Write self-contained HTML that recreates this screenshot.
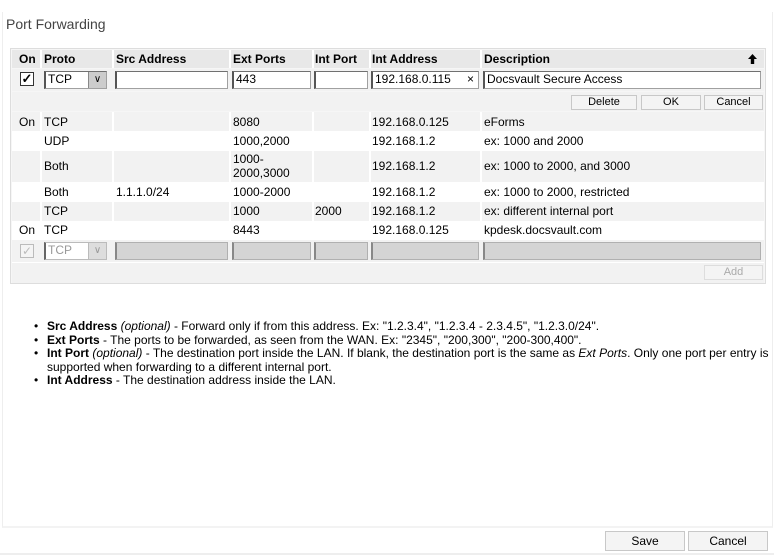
<!DOCTYPE html>
<html><head><meta charset="utf-8"><style>
*{box-sizing:border-box;margin:0;padding:0}
body{width:774px;height:555px;background:#fff;font-family:"Liberation Sans",Arial,sans-serif;font-size:12px;color:#000;position:relative;overflow:hidden}
.a{position:absolute}
.row{position:absolute;left:12px;width:752px}
.g{background:#f2f2f2}
.w{background:#fff}
.t{position:absolute;white-space:nowrap;line-height:14px}
.inp{position:absolute;height:18px;background:#fff;border:1px solid #a0a0a0;border-top-color:#707070;border-left:2px solid #555;font-size:12px;line-height:15px;padding-left:2px}
.dis{background:#d4d4d4;border-color:#b0b0b0;border-left-color:#888}
.btn{position:absolute;height:15px;background:#f4f4f4;border:1px solid #c8c8c8;text-align:center;font-size:11px;line-height:13px}
.vl{position:absolute;top:0;bottom:0;width:2px;background:#fff}
.n{position:relative;padding-left:13px;white-space:nowrap}
.n:before{content:"•";position:absolute;left:0}
</style></head><body>
<div class="a" style="left:2px;top:12px;width:771px;height:516px;border-left:1px solid #eee;border-right:1px solid #eee;border-bottom:2px solid #f3f3f3"></div>
<div class="a" style="left:6px;top:16px;font-size:14px;color:#444">Port Forwarding</div>
<div class="a" style="left:10px;top:48px;width:756px;height:236px;border:1px solid #ddd;background:#f6f6f6"></div>
<div class="row" style="top:50px;height:18px;background:#e8e8e8;font-weight:bold">
<div class="vl" style="left:28px"></div><div class="vl" style="left:100px"></div><div class="vl" style="left:217px"></div><div class="vl" style="left:300px"></div><div class="vl" style="left:357px"></div><div class="vl" style="left:468px"></div>
<span class="t" style="left:7px;top:2px">On</span><span class="t" style="left:32px;top:2px">Proto</span><span class="t" style="left:104px;top:2px">Src Address</span><span class="t" style="left:221px;top:2px">Ext Ports</span><span class="t" style="left:303px;top:2px">Int Port</span><span class="t" style="left:360px;top:2px">Int Address</span><span class="t" style="left:472px;top:2px">Description</span>
<svg class="a" style="left:736px;top:4px" width="9" height="10" viewBox="0 0 9 10"><path d="M4.5 0L9 5H6.2V10H2.8V5H0Z" fill="#000"/></svg>
</div>
<div class="row g" style="top:69px;height:22px"></div>
<div class="a" style="left:20px;top:72px;width:14px;height:14px;border:1px solid #333;background:#fff;font-size:13px;line-height:12px;text-align:center;font-weight:bold">✓</div>
<div class="inp" style="left:44px;top:71px;width:63px;border-left:2px solid #555">TCP</div>
<div class="a" style="left:88px;top:72px;width:18px;height:16px;background:#ccc;border-left:1px solid #888;text-align:center;font-size:10px;line-height:15px">&#x2228;</div>
<div class="inp" style="left:115px;top:71px;width:113px"></div>
<div class="inp" style="left:232px;top:71px;width:79px">443</div>
<div class="inp" style="left:314px;top:71px;width:54px"></div>
<div class="inp" style="left:371px;top:71px;width:108px">192.168.0.115<span style="position:absolute;right:4px;top:0">×</span></div>
<div class="inp" style="left:483px;top:71px;width:278px">Docsvault Secure Access</div>
<div class="row g" style="top:92px;height:19px"></div>
<div class="btn" style="left:571px;top:95px;width:66px">Delete</div>
<div class="btn" style="left:641px;top:95px;width:60px">OK</div>
<div class="btn" style="left:704px;top:95px;width:59px">Cancel</div>
<div class="row g" style="top:112px;height:19px"><div class="vl" style="left:28px"></div><div class="vl" style="left:100px"></div><div class="vl" style="left:217px"></div><div class="vl" style="left:300px"></div><div class="vl" style="left:357px"></div><div class="vl" style="left:468px"></div></div>
<div class="row w" style="top:131px;height:20px"></div>
<div class="row g" style="top:151px;height:31px"><div class="vl" style="left:28px"></div><div class="vl" style="left:100px"></div><div class="vl" style="left:217px"></div><div class="vl" style="left:300px"></div><div class="vl" style="left:357px"></div><div class="vl" style="left:468px"></div></div>
<div class="row w" style="top:182px;height:20px"></div>
<div class="row g" style="top:202px;height:19px"><div class="vl" style="left:28px"></div><div class="vl" style="left:100px"></div><div class="vl" style="left:217px"></div><div class="vl" style="left:300px"></div><div class="vl" style="left:357px"></div><div class="vl" style="left:468px"></div></div>
<div class="row w" style="top:221px;height:19px"></div>
<span class="t a" style="left:19px;top:115px">On</span><span class="t" style="left:44px;top:115px">TCP</span><span class="t" style="left:233px;top:115px">8080</span><span class="t" style="left:372px;top:115px">192.168.0.125</span><span class="t" style="left:484px;top:115px">eForms</span>
<span class="t" style="left:44px;top:134px">UDP</span><span class="t" style="left:233px;top:134px">1000,2000</span><span class="t" style="left:372px;top:134px">192.168.1.2</span><span class="t" style="left:484px;top:134px">ex: 1000 and 2000</span>
<span class="t" style="left:44px;top:159px">Both</span><span class="t" style="left:233px;top:152px">1000-<br>2000,3000</span><span class="t" style="left:372px;top:159px">192.168.1.2</span><span class="t" style="left:484px;top:159px">ex: 1000 to 2000, and 3000</span>
<span class="t" style="left:44px;top:185px">Both</span><span class="t" style="left:116px;top:185px">1.1.1.0/24</span><span class="t" style="left:233px;top:185px">1000-2000</span><span class="t" style="left:372px;top:185px">192.168.1.2</span><span class="t" style="left:484px;top:185px">ex: 1000 to 2000, restricted</span>
<span class="t" style="left:44px;top:204px">TCP</span><span class="t" style="left:233px;top:204px">1000</span><span class="t" style="left:315px;top:204px">2000</span><span class="t" style="left:372px;top:204px">192.168.1.2</span><span class="t" style="left:484px;top:204px">ex: different internal port</span>
<span class="t" style="left:19px;top:223px">On</span><span class="t" style="left:44px;top:223px">TCP</span><span class="t" style="left:233px;top:223px">8443</span><span class="t" style="left:372px;top:223px">192.168.0.125</span><span class="t" style="left:484px;top:223px">kpdesk.docsvault.com</span>
<div class="row g" style="top:240px;height:22px"></div>
<div class="a" style="left:20px;top:244px;width:14px;height:14px;border:1px solid #bbb;background:#f4f4f4;color:#bbb;font-size:12px;line-height:12px;text-align:center">✓</div>
<div class="inp" style="left:44px;top:242px;width:63px;color:#999;border-color:#bbb;border-left-color:#666">TCP</div>
<div class="a" style="left:88px;top:243px;width:18px;height:16px;background:#ddd;border-left:1px solid #bbb;text-align:center;font-size:10px;line-height:15px;color:#999">&#x2228;</div>
<div class="inp dis" style="left:115px;top:242px;width:113px"></div>
<div class="inp dis" style="left:232px;top:242px;width:79px"></div>
<div class="inp dis" style="left:314px;top:242px;width:54px"></div>
<div class="inp dis" style="left:371px;top:242px;width:108px"></div>
<div class="inp dis" style="left:483px;top:242px;width:278px"></div>
<div class="row" style="top:262px;height:21px;background:#f2f2f2;border-top:1px solid #fff"></div>
<div class="btn" style="left:704px;top:265px;width:59px;color:#aaa;border-color:#ddd">Add</div>
<div class="a" style="left:34px;top:320px;width:740px;line-height:13.5px;font-size:12px">
<div class="n"><b>Src Address</b> <i>(optional)</i> - Forward only if from this address. Ex: "1.2.3.4", "1.2.3.4 - 2.3.4.5", "1.2.3.0/24".</div>
<div class="n"><b>Ext Ports</b> - The ports to be forwarded, as seen from the WAN. Ex: "2345", "200,300", "200-300,400".</div>
<div class="n"><b>Int Port</b> <i>(optional)</i> - The destination port inside the LAN. If blank, the destination port is the same as <i>Ext Ports</i>. Only one port per entry is</div>
<div style="padding-left:13px">supported when forwarding to a different internal port.</div>
<div class="n"><b>Int Address</b> - The destination address inside the LAN.</div>
</div>
<div class="a" style="left:0;top:553px;width:774px;height:2px;background:#eee"></div>
<div class="btn" style="left:605px;top:531px;width:80px;height:20px;font-size:12px;line-height:18px">Save</div>
<div class="btn" style="left:688px;top:531px;width:80px;height:20px;font-size:12px;line-height:18px">Cancel</div>
</body></html>
